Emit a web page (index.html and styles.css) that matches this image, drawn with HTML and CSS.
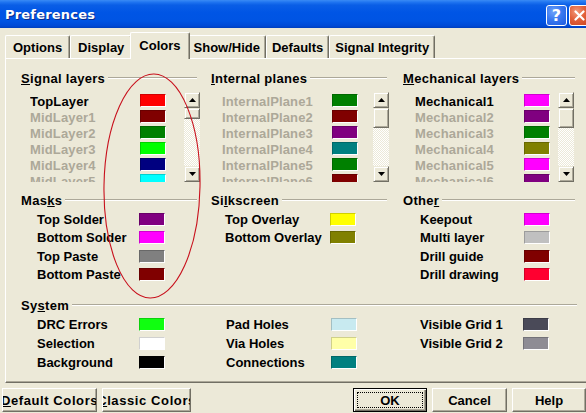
FILE: index.html
```html
<!DOCTYPE html>
<html>
<head>
<meta charset="utf-8">
<title>Preferences</title>
<link rel="stylesheet" href="styles.css">
</head>
<body>
<div class="window">
  <div class="titlebar">
    <span class="title">Preferences</span>
    <div class="tb-btns">
      <span class="tb-btn tb-help">?</span>
      <span class="tb-btn tb-close"><svg width="11" height="11" viewBox="0 0 11 11"><path d="M1.5 1.5 L9.5 9.5 M9.5 1.5 L1.5 9.5" stroke="#fff" stroke-width="2.2" stroke-linecap="round"/></svg></span>
    </div>
  </div>

  <div class="tabs">
    <div class="tab">Options</div>
    <div class="tab">Display</div>
    <div class="tab tab--active">Colors</div>
    <div class="tab tab--tight">Show/Hide</div>
    <div class="tab tab--tight">Defaults</div>
    <div class="tab tab--tight">Signal Integrity</div>
  </div>

  <div class="panel">
    <div class="sec sec-top">
      <div class="col">
        <div class="group-head"><span><u>S</u>ignal layers</span><span class="rule"></span></div>
        <div class="list list--sig">
          <div class="items">
            <div class="lrow"><span class="name">TopLayer</span><span class="swatch c-red"></span></div>
            <div class="lrow dis"><span class="name">MidLayer1</span><span class="swatch c-maroon"></span></div>
            <div class="lrow dis"><span class="name">MidLayer2</span><span class="swatch c-green"></span></div>
            <div class="lrow dis"><span class="name">MidLayer3</span><span class="swatch c-lime"></span></div>
            <div class="lrow dis"><span class="name">MidLayer4</span><span class="swatch c-navy"></span></div>
            <div class="lrow dis"><span class="name">MidLayer5</span><span class="swatch c-cyan"></span></div>
          </div>
          <div class="scroll">
            <span class="sb-btn"><svg width="7" height="4" viewBox="0 0 7 4"><path d="M3.5 0 L7 4 H0 Z"/></svg></span>
            <span class="thumb thumb--short"></span>
            <span class="track"></span>
            <span class="sb-btn"><svg width="7" height="4" viewBox="0 0 7 4"><path d="M0 0 H7 L3.5 4 Z"/></svg></span>
          </div>
        </div>
      </div>
      <div class="col">
        <div class="group-head"><span><u>I</u>nternal planes</span><span class="rule"></span></div>
        <div class="list list--int">
          <div class="items">
            <div class="lrow dis"><span class="name">InternalPlane1</span><span class="swatch c-green"></span></div>
            <div class="lrow dis"><span class="name">InternalPlane2</span><span class="swatch c-maroon"></span></div>
            <div class="lrow dis"><span class="name">InternalPlane3</span><span class="swatch c-purple"></span></div>
            <div class="lrow dis"><span class="name">InternalPlane4</span><span class="swatch c-teal"></span></div>
            <div class="lrow dis"><span class="name">InternalPlane5</span><span class="swatch c-green"></span></div>
            <div class="lrow dis"><span class="name">InternalPlane6</span><span class="swatch c-maroon"></span></div>
          </div>
          <div class="scroll">
            <span class="sb-btn"><svg width="7" height="4" viewBox="0 0 7 4"><path d="M3.5 0 L7 4 H0 Z"/></svg></span>
            <span class="thumb"></span>
            <span class="track"></span>
            <span class="sb-btn"><svg width="7" height="4" viewBox="0 0 7 4"><path d="M0 0 H7 L3.5 4 Z"/></svg></span>
          </div>
        </div>
      </div>
      <div class="col">
        <div class="group-head group-head--narrow"><span><u>M</u>echanical layers</span><span class="rule"></span></div>
        <div class="list list--mech">
          <div class="items">
            <div class="lrow"><span class="name">Mechanical1</span><span class="swatch c-fuchsia"></span></div>
            <div class="lrow dis"><span class="name">Mechanical2</span><span class="swatch c-purple"></span></div>
            <div class="lrow dis"><span class="name">Mechanical3</span><span class="swatch c-green"></span></div>
            <div class="lrow dis"><span class="name">Mechanical4</span><span class="swatch c-olive"></span></div>
            <div class="lrow dis"><span class="name">Mechanical5</span><span class="swatch c-fuchsia"></span></div>
            <div class="lrow dis"><span class="name">Mechanical6</span><span class="swatch c-purple"></span></div>
          </div>
          <div class="scroll">
            <span class="sb-btn"><svg width="7" height="4" viewBox="0 0 7 4"><path d="M3.5 0 L7 4 H0 Z"/></svg></span>
            <span class="thumb"></span>
            <span class="track"></span>
            <span class="sb-btn"><svg width="7" height="4" viewBox="0 0 7 4"><path d="M0 0 H7 L3.5 4 Z"/></svg></span>
          </div>
        </div>
      </div>
    </div>

    <div class="sec sec-mid">
      <div class="col">
        <div class="group-head"><span>Mas<u>k</u>s</span><span class="rule"></span></div>
        <div class="items-grid ig-1">
          <div class="irow"><span class="name">Top Solder</span><span class="swatch c-purple"></span></div>
          <div class="irow"><span class="name">Bottom Solder</span><span class="swatch c-fuchsia"></span></div>
          <div class="irow"><span class="name">Top Paste</span><span class="swatch c-gray"></span></div>
          <div class="irow"><span class="name">Bottom Paste</span><span class="swatch c-maroon"></span></div>
        </div>
      </div>
      <div class="col">
        <div class="group-head"><span>Si<u>l</u>kscreen</span><span class="rule"></span></div>
        <div class="items-grid ig-2">
          <div class="irow"><span class="name">Top Overlay</span><span class="swatch c-yellow"></span></div>
          <div class="irow"><span class="name">Bottom Overlay</span><span class="swatch c-olive"></span></div>
        </div>
      </div>
      <div class="col">
        <div class="group-head group-head--narrow"><span>Othe<u>r</u></span><span class="rule"></span></div>
        <div class="items-grid ig-3">
          <div class="irow"><span class="name">Keepout</span><span class="swatch c-fuchsia"></span></div>
          <div class="irow"><span class="name">Multi layer</span><span class="swatch c-silver"></span></div>
          <div class="irow"><span class="name">Drill guide</span><span class="swatch c-maroon"></span></div>
          <div class="irow"><span class="name">Drill drawing</span><span class="swatch c-drill"></span></div>
        </div>
      </div>
    </div>

    <div class="sec-sys">
      <div class="group-head group-head--wide"><span>Sy<u>s</u>tem</span><span class="rule"></span></div>
      <div class="sys-grid">
        <div class="items-grid ig-1 sys">
          <div class="irow"><span class="name">DRC Errors</span><span class="swatch c-drc"></span></div>
          <div class="irow"><span class="name">Selection</span><span class="swatch c-white"></span></div>
          <div class="irow"><span class="name">Background</span><span class="swatch c-black"></span></div>
        </div>
        <div class="items-grid ig-2s sys">
          <div class="irow"><span class="name">Pad Holes</span><span class="swatch c-pad"></span></div>
          <div class="irow"><span class="name">Via Holes</span><span class="swatch c-via"></span></div>
          <div class="irow"><span class="name">Connections</span><span class="swatch c-teal"></span></div>
        </div>
        <div class="items-grid ig-3s sys">
          <div class="irow"><span class="name">Visible Grid 1</span><span class="swatch c-grid1"></span></div>
          <div class="irow"><span class="name">Visible Grid 2</span><span class="swatch c-grid2"></span></div>
        </div>
      </div>
    </div>
  </div>

  <div class="buttons">
    <span class="btn btn-default btn--wide-text"><span><u>D</u>efault Colors</span></span>
    <span class="btn btn-classic btn--wide-text"><span><u>C</u>lassic Colors</span></span>
    <span class="btn btn-ok">OK</span>
    <span class="btn btn-cancel">Cancel</span>
    <span class="btn btn-help">Help</span>
  </div>

  <svg class="annotation" width="104" height="232" viewBox="0 0 104 232">
    <ellipse cx="52" cy="116" rx="48" ry="112" fill="none" stroke="#c8101c" stroke-width="1.1" transform="rotate(1 52 116)"/>
  </svg>
</div>
</body>
</html>
```

FILE: styles.css
```css
* { box-sizing: border-box; }

body {
  margin: 0;
  width: 586px;
  height: 413px;
  overflow: hidden;
  background: #ECE9D8;
  font: bold 13px "Liberation Sans", Arial, sans-serif;
  color: #000;
}

u { text-decoration: underline; text-underline-offset: 1px; }

.window {
  position: relative;
  width: 600px;
  height: 413px;
}

/* Title bar */
.titlebar {
  height: 28px;
  display: flex;
  align-items: center;
  padding-left: 5px;
  background: linear-gradient(180deg, #3A8BF5 0%, #1F74F0 8%, #0A5EE6 18%, #0055E5 45%, #0054E3 75%, #004AD6 92%, #003FBE 100%);
}

.title {
  color: #fff;
  font: bold 13px "DejaVu Sans", sans-serif;
  letter-spacing: 0.2px;
  text-shadow: 1px 1px 0 #0A2C8C;
  margin-top: 1px;
}

.tb-btns {
  margin-left: auto;
  margin-right: 10px;
  display: flex;
  gap: 2px;
  margin-top: 3px;
}

.tb-btn {
  width: 21px;
  height: 21px;
  border: 1px solid #fff;
  border-radius: 3px;
  display: flex;
  align-items: center;
  justify-content: center;
  color: #fff;
}

.tb-help {
  background: radial-gradient(circle at 35% 30%, #6FA3FA 0%, #3A79F0 45%, #1D5BE0 100%);
  font: bold 16px "DejaVu Sans", sans-serif;
}

.tb-close {
  background: radial-gradient(circle at 35% 30%, #F29A7C 0%, #E2603A 45%, #C8431F 100%);
}

/* Tabs */
.tabs {
  height: 30px;
  display: flex;
  align-items: flex-end;
  padding-left: 5px;
  position: relative;
  z-index: 1;
}

.tab {
  height: 23px;
  padding: 0 7px;
  display: flex;
  align-items: center;
  background: #ECE9D8;
  border-top: 1px solid #fff;
  border-left: 1px solid #fff;
  border-right: 1px solid #716F64;
  box-shadow: inset -1px 0 #ACA899;
  border-radius: 2px 2px 0 0;
}

.tab--tight { padding: 0 5px; }

.tab--active {
  height: 27px;
  margin: 0 -2px -1px -2px;
  padding: 0 8px 2px 8px;
  position: relative;
  z-index: 2;
}

/* Panel */
.panel {
  margin-left: 5px;
  height: 325px;
  border-top: 1px solid #fff;
  border-left: 1px solid #fff;
  border-bottom: 1px solid #716F64;
  box-shadow: inset 0 -1px #ACA899;
  padding: 11px 0 0 15px;
}

.sec {
  display: grid;
  grid-template-columns: 190px 192px 174px;
}

.group-head {
  width: 176px;
  height: 16px;
  display: flex;
  align-items: center;
  letter-spacing: 0.3px;
  white-space: nowrap;
}

.group-head--narrow { width: 172px; }
.group-head--wide { width: 556px; }

.rule {
  flex: 1;
  height: 2px;
  margin-left: 3px;
  border-top: 1px solid #ACA899;
  border-bottom: 1px solid #fff;
}

/* Lists */
.list {
  display: flex;
  height: 90px;
  margin-top: 6px;
}

.list .items {
  padding-top: 2px;
  overflow: hidden;
  height: 90px;
}

.list--sig { margin-left: 9px; }
.list--sig .items { width: 154px; }
.list--int { margin-left: 11px; }
.list--int .items { width: 151px; }
.list--mech { margin-left: 12px; }
.list--mech .items { width: 143px; }

.lrow {
  display: flex;
  align-items: flex-start;
  height: 16px;
  white-space: nowrap;
}

.lrow .name {
  width: 110px;
  line-height: 16px;
  letter-spacing: 0.15px;
}

.list--mech .lrow .name { width: 109px; }

.lrow.dis .name { color: #ACA899; }

.swatch {
  display: block;
  width: 26px;
  height: 13px;
  flex: none;
  border: 1px solid;
  border-color: rgba(0,0,0,0.18) #fff #fff rgba(0,0,0,0.18);
}

/* Scrollbars */
.scroll {
  width: 16px;
  height: 90px;
  display: flex;
  flex-direction: column;
  background-color: #fff;
  background-image: repeating-conic-gradient(#ECE9D8 0 25%, #fff 0 50%);
  background-size: 2px 2px;
}

.sb-btn, .thumb {
  display: flex;
  align-items: center;
  justify-content: center;
  background: #ECE9D8;
  border: 1px solid;
  border-color: #ECE9D8 #716F64 #716F64 #ECE9D8;
  box-shadow: inset 1px 1px #fff, inset -1px -1px #ACA899;
}

.sb-btn { height: 16px; flex: none; }
.thumb { height: 20px; flex: none; }
.thumb--short { height: 11px; }
.track { flex: 1; }

/* Simple item groups */
.sec-mid { margin-top: 10px; }

.items-grid { margin-top: 2px; }

.irow {
  display: flex;
  align-items: center;
  height: 18.5px;
  white-space: nowrap;
}

.sys .irow { height: 19px; }

.ig-1 { padding-left: 16px; }
.ig-1 .name { width: 102px; }
.ig-2 { padding-left: 14px; }
.ig-2 .name { width: 105px; }
.ig-3 { padding-left: 17px; }
.ig-3 .name { width: 104px; }
.ig-2s { padding-left: 15px; }
.ig-2s .name { width: 105px; }
.ig-3s { padding-left: 17px; }
.ig-3s .name { width: 103px; }

.sec-sys { margin-top: 13px; }

.sys-grid {
  display: grid;
  grid-template-columns: 190px 192px 174px;
}

/* Colours */
.c-red { background: #FF0000; }
.c-maroon { background: #800000; }
.c-green { background: #008000; }
.c-lime { background: #00FF00; }
.c-navy { background: #000080; }
.c-cyan { background: #00FFFF; }
.c-purple { background: #800080; }
.c-teal { background: #008080; }
.c-fuchsia { background: #FF00FF; }
.c-olive { background: #808000; }
.c-gray { background: #808080; }
.c-yellow { background: #FFFF00; }
.c-silver { background: #C0C0C0; }
.c-drill { background: #FF0030; }
.c-drc { background: #10FF10; }
.c-white { background: #FFFFFF; }
.c-black { background: #000000; }
.c-pad { background: #C8EAF0; }
.c-via { background: #FFFFA8; }
.c-grid1 { background: #4A4A58; }
.c-grid2 { background: #8E8C94; }

/* Buttons */
.buttons {
  display: flex;
  height: 24px;
  margin-top: 5px;
  padding-left: 2px;
  padding-right: 14px;
  gap: 5px;
}

.btn {
  height: 24px;
  display: flex;
  align-items: center;
  justify-content: center;
  overflow: hidden;
  white-space: nowrap;
  background: #ECE9D8;
  border: 1px solid;
  border-color: #fff #716F64 #716F64 #fff;
  box-shadow: inset -1px -1px #ACA899;
}

.btn--wide-text > span { letter-spacing: 0.6px; }

.btn-default { width: 95px; }
.btn-classic { width: 89px; }
.btn-ok {
  width: 74px;
  margin-left: auto;
  position: relative;
  border-color: #000;
  box-shadow: inset 1px 1px #fff, inset -1px -1px #716F64, inset -2px -2px #ACA899;
}
.btn-ok::after {
  content: "";
  position: absolute;
  inset: 3px;
  border: 1px dotted #000;
}
.btn-cancel { width: 75px; }
.btn-help { width: 74px; }

/* Red annotation ellipse drawn over the dialog */
.annotation {
  position: absolute;
  left: 100px;
  top: 70px;
  pointer-events: none;
}
```
